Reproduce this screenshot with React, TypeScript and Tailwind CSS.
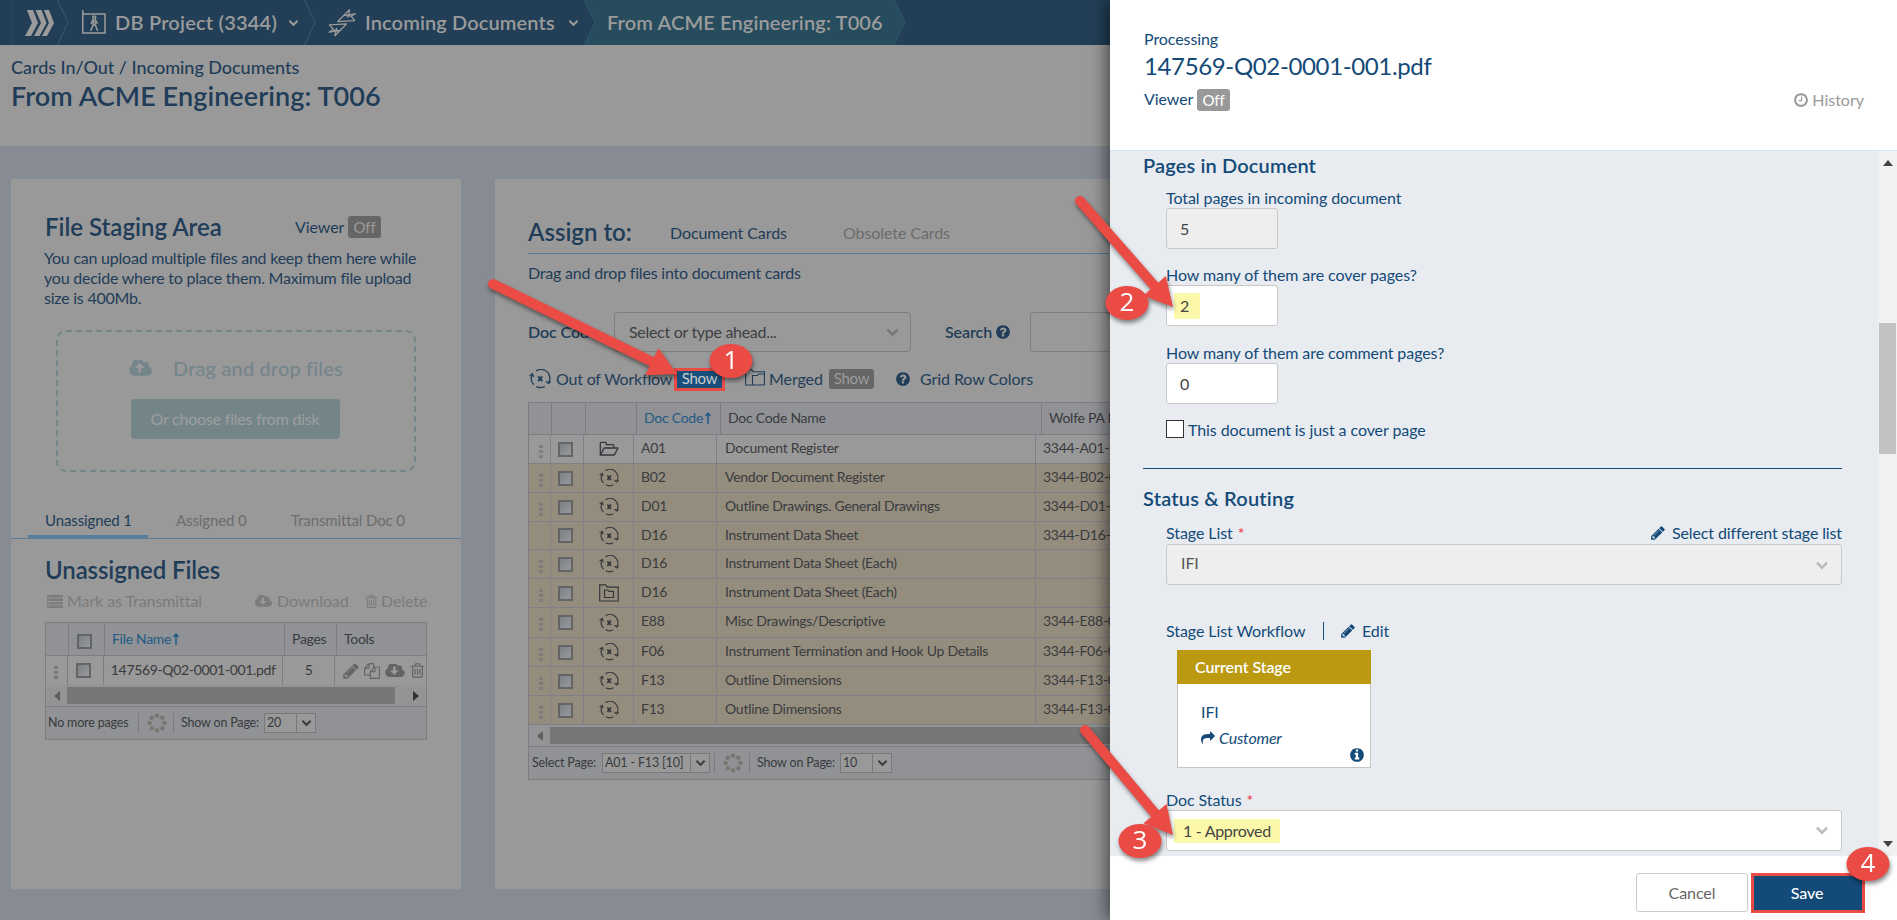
import type { ReactNode } from 'react';

const CLOUD =
  'M1856 1152q0 159-112.5 271.5t-271.5 112.5h-1088q-185 0-316.5-131.5t-131.5-316.5q0-130 70-240t188-165q-2-30-2-43 0-212 150-362t362-150q156 0 285.5 87t188.5 231q71-62 166-62 106 0 181 75t75 181q0 76-41 138 130 31 213.5 135.5t83.5 238.5z';

const PATHS = {
  trash:
    'M704 736v576q0 14-9 23t-23 9h-64q-14 0-23-9t-9-23v-576q0-14 9-23t23-9h64q14 0 23 9t9 23zm256 0v576q0 14-9 23t-23 9h-64q-14 0-23-9t-9-23v-576q0-14 9-23t23-9h64q14 0 23 9t9 23zm256 0v576q0 14-9 23t-23 9h-64q-14 0-23-9t-9-23v-576q0-14 9-23t23-9h64q14 0 23 9t9 23zm128 724v-948h-896v948q0 22 7 40.5t14.5 27 10.5 8.5h832q3 0 10.5-8.5t14.5-27 7-40.5zm-672-1076h448l-48-117q-7-9-17-11h-317q-10 2-17 11zm928 32v64q0 14-9 23t-23 9h-96v948q0 83-47 143.5t-113 60.5h-832q-66 0-113-58.5t-47-141.5v-952h-96q-14 0-23-9t-9-23v-64q0-14 9-23t23-9h309l70-167q15-37 54-63t79-26h320q40 0 79 26t54 63l70 167h309q14 0 23 9t9 23z',
  clock:
    'M1024 544v448q0 14-9 23t-23 9h-320q-14 0-23-9t-9-23v-64q0-14 9-23t23-9h224v-352q0-14 9-23t23-9h64q14 0 23 9t9 23zm416 352q0-148-73-273t-198-198-273-73-273 73-198 198-73 273 73 273 198 198 273 73 273-73 198-198 73-273zm224 0q0 209-103 385.5t-279.5 279.5-385.5 103-385.5-103-279.5-279.5-103-385.5 103-385.5 279.5-279.5 385.5-103 385.5 103 279.5 279.5 103 385.5z',
  share:
    'M1792 640q0 26-19 45l-512 512q-19 19-45 19t-45-19-19-45v-256h-224q-98 0-175.5 6t-154 21.5-133 42.5-105.5 69.5-80 101-48.5 138.5-17.5 181q0 55 5 123 0 6 2.5 23.5t2.5 26.5q0 15-8.5 25t-23.5 10q-16 0-28-17-7-9-13-22t-13.5-30-10.5-24q-127-285-127-451 0-199 53-333 162-403 875-403h224v-256q0-26 19-45t45-19 45 19l512 512q19 19 19 45z',
  pencil:
    'M491 1536l91-91-235-235-91 91v107h128v128h107zm523-928q0-22-22-22-10 0-17 7l-542 542q-7 7-7 17 0 22 22 22 10 0 17-7l542-542q7-7 7-17zm-54-192l416 416-832 832h-416v-416zm683 96q0 53-37 90l-166 166-416-416 166-165q36-38 90-38 53 0 91 38l235 234q37 39 37 91z',
  files:
    'M1696 384q40 0 68 28t28 68v1216q0 40-28 68t-68 28h-960q-40 0-68-28t-28-68v-288h-544q-40 0-68-28t-28-68v-672q0-40 20-88t48-76l408-408q28-28 76-48t88-20h416q40 0 68 28t28 68v328q68-40 128-40h416zm-544 213l-299 299h299v-299zm-640-384l-299 299h299v-299zm196 647l316-316v-416h-384v416q0 40-28 68t-68 28h-416v640h512v-256q0-40 20-88t48-76zm956 804v-1152h-384v416q0 40-28 68t-68 28h-416v640h896z',
  question:
    'M1024 1376v-192q0-14-9-23t-23-9h-192q-14 0-23 9t-9 23v192q0 14 9 23t23 9h192q14 0 23-9t9-23zm256-672q0-88-55.5-163t-138.5-116-170-41q-243 0-371 213-15 24 8 42l132 100q7 6 19 6 16 0 25-12 53-68 86-92 34-24 86-24 48 0 85.5 26t37.5 59q0 38-20 61t-68 45q-63 28-115.5 86.5t-52.5 125.5v36q0 14 9 23t23 9h192q14 0 23-9t9-23q0-19 21.5-49.5t54.5-49.5q32-18 49-28.5t46-35 44.5-48 28-60.5 12.5-81zm384 192q0 209-103 385.5t-279.5 279.5-385.5 103-385.5-103-279.5-279.5-103-385.5 103-385.5 279.5-279.5 385.5-103 385.5 103 279.5 279.5 103 385.5z',
  info:
    'M1152 1376v-160q0-14-9-23t-23-9h-96v-512q0-14-9-23t-23-9h-320q-14 0-23 9t-9 23v160q0 14 9 23t23 9h96v320h-96q-14 0-23 9t-9 23v160q0 14 9 23t23 9h448q14 0 23-9t9-23zm-128-896v-160q0-14-9-23t-23-9h-192q-14 0-23 9t-9 23v160q0 14 9 23t23 9h192q14 0 23-9t9-23zm640 416q0 209-103 385.5t-279.5 279.5-385.5 103-385.5-103-279.5-279.5-103-385.5 103-385.5 279.5-279.5 385.5-103 385.5 103 279.5 279.5 103 385.5z',
};

function Fa({ name, className = '' }: { name: keyof typeof PATHS; className?: string }) {
  return (
    <svg viewBox="0 0 1792 1792" fill="currentColor" fillRule="evenodd" className={'shrink-0 ' + className}>
      <path d={PATHS[name]} />
    </svg>
  );
}

function Cloud({ up, hole, className = '' }: { up?: boolean; hole: string; className?: string }) {
  return (
    <svg viewBox="-64 256 1920 1280" className={'shrink-0 ' + className}>
      <path d={CLOUD} fill="currentColor" />
      <path
        fill={hole}
        d={
          up
            ? 'M1216 864q0-14-9-23l-352-352q-9-9-23-9t-23 9l-351 351q-10 12-10 24 0 14 9 23t23 9h224v352q0 13 9.5 22.5t22.5 9.5h192q13 0 22.5-9.5t9.5-22.5v-352h224q13 0 22.5-9.5t9.5-22.5z'
            : 'M1216 928q0-14-9-23t-23-9h-224v-352q0-13-9.5-22.5t-22.5-9.5h-192q-13 0-22.5 9.5t-9.5 22.5v352h-224q-13 0-22.5 9.5t-9.5 22.5q0 14 9 23l352 352q9 9 23 9t23-9l351-351q10-12 10-24z'
        }
      />
    </svg>
  );
}

function OutOfWorkflow({ className }: { className: string }) {
  return (
    <svg viewBox="0 0 22 20" className={'shrink-0 ' + className} fill="none" stroke="currentColor" strokeWidth="1.3">
      <path d="M7.200 1.900A8.800 8.800 0 0 1 19.600 13.800M3.300 5.500A8.800 8.800 0 0 0 4.900 15.700M7.400 17.600A8.800 8.800 0 0 0 15.800 17.500" />
      <path d="M.5 6.800 3.500 4.800 4.600 8M17 12.300l2.400 2.200 2.400-2" />
      <path d="m9.200 7.400 4 4.800m0-4.800-4 4.800" strokeWidth="1.900" />
    </svg>
  );
}

function OpenFolder() {
  return (
    <svg viewBox="0 0 20 16" className="h-4 w-5" fill="none" stroke="currentColor" strokeWidth="1.3" strokeLinejoin="round">
      <path d="M1.3 14V2.3q0-1 1-1h4q1 0 1 1V3.6h6.500q1 0 1 1V7M1.3 14 4.8 7.600q.3-.6 1-.6h12.500q.8 0 .4.700l-3 5.700q-.3.600-1 .600H1.300z" />
    </svg>
  );
}

function BoxFolder() {
  return (
    <svg viewBox="0 0 20 18" className="h-[18px] w-5 shrink-0" fill="none" stroke="currentColor" strokeWidth="1.200">
      <path d="M.7 17V.8h6l1.500 2.300h11V17z" />
      <path d="M5.500 13.500V6h3.300l1 1.400h4.700v6.100z" />
    </svg>
  );
}

function MergedFolder() {
  return (
    <svg viewBox="0 0 20 17" className="h-[17px] w-5 shrink-0" fill="none" stroke="currentColor" strokeWidth="1.100">
      <path d="M7.500 16H.6V.8h6L8 2.800h11.400V16" />
      <path d="M7.500 16V6.500h4.800l1.200-1.500h5.900M7.500 16h11.900" />
    </svg>
  );
}

function SortArrow() {
  return (
    <svg viewBox="0 0 6 12" className="ml-[2px] inline-block h-3 w-[6px] -translate-y-px" fill="none" stroke="currentColor" strokeWidth="1.500">
      <path d="M3 12V1.500M.5 4 3 1.200 5.500 4" />
    </svg>
  );
}

function Spinner() {
  return (
    <svg viewBox="0 0 20 20" className="size-5 shrink-0" fill="#767770">
      <circle cx="10" cy="2.600" r="2.200" />
      <circle cx="15.300" cy="4.700" r="2.200" />
      <circle cx="17.400" cy="10" r="2.200" />
      <circle cx="15.300" cy="15.300" r="2.200" />
      <circle cx="10" cy="17.400" r="2.200" />
      <circle cx="4.700" cy="15.300" r="2.200" />
      <circle cx="2.600" cy="10" r="2.200" />
      <circle cx="4.700" cy="4.700" r="2.200" />
    </svg>
  );
}

function Chevron({ className = '' }: { className?: string }) {
  return (
    <svg viewBox="0 0 12 8" className={'shrink-0 ' + className} fill="none" stroke="currentColor" strokeWidth="2.200">
      <path d="m1.500 1.500 4.500 4.500 4.500-4.500" />
    </svg>
  );
}

function Box() {
  return <span className="block size-[15px] border-2 border-[#636466] bg-linear-to-br from-[#7d8084] to-[#96989b]" />;
}

function Grip() {
  return (
    <span className="flex flex-col gap-[2px]">
      <i className="block h-[3px] w-1 bg-[#78797b]" />
      <i className="block h-[3px] w-1 bg-[#78797b]" />
      <i className="block h-[3px] w-1 bg-[#78797b]" />
    </span>
  );
}

function Separator({ className = '' }: { className?: string }) {
  return (
    <svg viewBox="0 0 12 45" className={'h-[45px] w-3 shrink-0 ' + className} fill="none" stroke="#2f5569" strokeWidth="1.300">
      <path d="M.5 0 11 22.500.5 45" />
    </svg>
  );
}

function MiniSelect({ value, className }: { value: string; className: string }) {
  return (
    <span className={'flex h-5 border border-[#77797b] bg-[#999] ' + className}>
      <span className="flex-1 pl-[2px] leading-[18px]">{value}</span>
      <span className="flex w-[19px] items-center justify-center border-l border-[#77797b]">
        <Chevron className="h-2 w-[11px] text-[#3a3d40]" />
      </span>
    </span>
  );
}

function NavBar() {
  return (
    <nav className="flex h-[45px] items-center bg-[#233f57] text-[20px] leading-[26px] font-semibold text-[#9b9b9b]">
      <span className="ml-[11px] h-full w-px bg-[#294a60]" />
      <svg viewBox="0 0 30 26" className="ml-[13px] h-[26px] w-[30px]" fill="#9b9b9b">
        <path d="M2 0h6l5 13-7 13H0l7-13zM10.500 0h6l5 13-7 13h-5.500l7-13zM19 0h5l5 13-7 13h-5l7-13z" />
      </svg>
      <Separator className="ml-[2px]" />
      <svg viewBox="0 0 26 25" className="ml-3 h-[25px] w-[26px]" fill="none" stroke="#9b9b9b" strokeWidth="1.500">
        <path d="M1.800 0v23.300M1 4h23v19H1" />
        <circle cx="13.200" cy="7.500" r="1.500" />
        <path d="m12 9.500-2 4.500M12.200 9.500v5l-2.500 6.500M14.300 9.500l2.200 4.500M14.200 9.500v5L16.700 21M11.500 15h3.500" />
      </svg>
      <span className="ml-[8px] w-[173px] pb-[2px] tracking-[0.21px]">DB Project (3344)</span>
      <Chevron className="h-[8px] w-[11px]" />
      <Separator className="ml-[5px]" />
      <svg viewBox="0 0 30 30" className="ml-3 h-[30px] w-[29px]" fill="none" stroke="#9b9b9b" strokeWidth="1.300" strokeLinejoin="round">
        <path d="M22.500 1 10 13.500l17.500-1-3.500-4.500 4.500-2.500-11 1.500M22.500 1l-2 8.500M17 7l7 1" />
        <path d="m7 28.500 12-12.500-17.500 1 4 4.500-4.500 3 11-1.500M7 28.500l2-8.500M12.500 23l-7-1" />
      </svg>
      <span className="ml-[8px] w-[203px] pb-[2px] tracking-[0.12px]">Incoming Documents</span>
      <Chevron className="h-[8px] w-[11px]" />
      <div className="relative ml-[5px] flex h-[45px] w-[322px] items-center">
        <svg viewBox="0 0 322 45" className="absolute inset-0 h-[45px] w-[322px]">
          <path d="M.5 0H310l11 22.500L310 45H.5L11 22.500z" fill="#264c5e" />
          <path d="M.5 0 11 22.500.5 45M310 0l11 22.500L310 45" fill="none" stroke="#2f5a6c" />
        </svg>
        <span className="relative ml-[23px] pb-[2px] tracking-[0.13px]">From ACME Engineering: T006</span>
      </div>
    </nav>
  );
}

function StagingCard() {
  return (
    <section className="h-[710px] w-[450px] shrink-0 bg-[#999] tracking-[-0.08px]">
      <div className="mt-[33px] flex h-[30px] items-center pl-[34px]">
        <h2 className="w-[250px] text-[24px] font-semibold tracking-normal">File Staging Area</h2>
        <span className="w-[53px] text-[16px]">Viewer</span>
        <span className="h-[22px] w-[33px] rounded-[3px] bg-[#666] text-center text-[15px] leading-[22px] text-[#9c9c9c]">Off</span>
      </div>
      <p className="mt-[6px] pl-[33px] text-[16px] leading-5 tracking-[-0.23px]">
        You can upload multiple files and keep them here while
        <br />
        you decide where to place them. Maximum file upload
        <br />
        size is 400Mb.
      </p>
      <div className="mt-[22px] ml-[45px] flex h-[142px] w-[360px] flex-col items-center rounded-[10px] border-2 border-dashed border-[#748589] text-[#74858b]">
        <div className="mt-[23px] flex h-[26px] w-full items-center pl-[71px]">
          <Cloud up hole="#999" className="h-4 w-[23px]" />
          <span className="ml-[21px] text-[20px] leading-6 font-medium tracking-[0.15px]">Drag and drop files</span>
        </div>
        <span className="mt-[18px] mr-[2px] h-10 w-[209px] rounded-[4px] bg-[#74858a] text-center text-[16px] leading-10 tracking-[-0.22px] text-[#9e9e9e]">
          Or choose files from disk
        </span>
      </div>
      <div className="mt-[34px] flex h-[33px] items-end border-b border-[#587d98] pl-[17px] text-[15px] tracking-[-0.12px] text-[#6c6c6c]">
        <span className="h-8 w-[120px] border-b-[3px] border-[#587d98] pl-[17px] leading-[28px] text-[#1f3d58]">Unassigned 1</span>
        <span className="h-8 w-[115px] pl-7 leading-[28px]">Assigned 0</span>
        <span className="h-8 pl-7 leading-[28px]">Transmittal Doc 0</span>
      </div>
      <h2 className="mt-[15px] pl-[34px] text-[24px] leading-[32px] font-semibold tracking-[-0.1px]">Unassigned Files</h2>
      <div className="mt-[5px] flex h-5 items-center pl-[36px] text-[16px] text-[#7b7b7b]">
        <svg viewBox="0 0 16 13" className="h-[13px] w-4" fill="currentColor">
          <path d="M0 0h2.500v2.500H0zM3 0h13v2.500H3zM0 3.500h2.500V6H0zM3 3.500h13V6H3zM0 7h2.500v2.500H0zM3 7h13v2.500H3zM0 10.500h2.500V13H0zM3 10.500h13V13H3z" />
        </svg>
        <span className="ml-1 w-[188px]">Mark as Transmittal</span>
        <Cloud hole="#999" className="h-3 w-[17px]" />
        <span className="ml-[5px] w-[87px]">Download</span>
        <Fa name="trash" className="size-[15px]" />
        <span className="ml-[2px]">Delete</span>
      </div>
      <div className="mt-[11px] ml-[34px] w-[382px] border border-[#7c7d80] text-[14px] tracking-[-0.3px] text-[#393b3e]">
        <div className="flex h-[33px] border-b border-[#7c7d80] bg-[#909295] leading-[31px]">
          <span className="w-[23px] border-r border-[#7c7d80]" />
          <span className="flex w-9 items-center border-r border-[#7c7d80] pt-1 pl-2">
            <Box />
          </span>
          <span className="w-[180px] border-r border-[#7c7d80] pl-[7px] text-[#1f5a86]">
            File Name
            <SortArrow />
          </span>
          <span className="w-[52px] border-r border-[#7c7d80] pl-[7px]">Pages</span>
          <span className="pl-[7px]">Tools</span>
        </div>
        <div className="flex h-[29px] leading-[27px]">
          <span className="flex w-[22px] items-center justify-center border-r border-[#7c7d80] pt-1">
            <Grip />
          </span>
          <span className="flex w-9 items-center border-r border-[#7c7d80] pl-2">
            <Box />
          </span>
          <span className="w-[180px] border-r border-[#7c7d80] pl-[7px] tracking-[-0.34px]">147569-Q02-0001-001.pdf</span>
          <span className="w-[52px] border-r border-[#7c7d80] text-center">5</span>
          <span className="flex items-center gap-[3px] pl-[7px] text-[#626466]">
            <Fa name="pencil" className="size-[18px]" />
            <Fa name="files" className="ml-px size-4" />
            <Cloud hole="#999" className="ml-[2px] h-[13px] w-[20px]" />
            <Fa name="trash" className="ml-px size-[17px]" />
          </span>
        </div>
        <div className="flex h-[21px] items-center bg-[#939495]">
          <svg viewBox="0 0 6 10" className="ml-[8px] h-[10px] w-[6px]" fill="#5d5d5d">
            <path d="M6 0v10L0 5z" />
          </svg>
          <span className="ml-[7px] h-[17px] w-[328px] bg-[#777]" />
          <svg viewBox="0 0 6 10" className="ml-[18px] h-[10px] w-[6px]" fill="#333">
            <path d="M0 0v10l6-5z" />
          </svg>
        </div>
        <div className="flex h-[33px] items-center border-t border-[#7c7d80] bg-[#909295] text-[12.500px] tracking-[-0.18px]">
          <span className="w-[92px] pl-[2px]">No more pages</span>
          <span className="h-5 w-px bg-[#7c7d80]" />
          <span className="ml-2">
            <Spinner />
          </span>
          <span className="ml-[6px] h-5 w-px bg-[#7c7d80]" />
          <span className="ml-[7px] w-[83px]">Show on Page:</span>
          <MiniSelect value="20" className="w-[52px]" />
        </div>
      </div>
    </section>
  );
}

type Row = { code: string; name: string; num: string; icon: 'open' | 'out' | 'box'; grip: boolean; height: string };

const ROWS: Row[] = [
  { code: 'A01', name: 'Document Register', num: '3344-A01-001', icon: 'open', grip: true, height: 'h-[29px]' },
  { code: 'B02', name: 'Vendor Document Register', num: '3344-B02-001', icon: 'out', grip: true, height: 'h-[29px]' },
  { code: 'D01', name: 'Outline Drawings. General Drawings', num: '3344-D01-001', icon: 'out', grip: true, height: 'h-[29px]' },
  { code: 'D16', name: 'Instrument Data Sheet', num: '3344-D16-001', icon: 'out', grip: false, height: 'h-[28px]' },
  { code: 'D16', name: 'Instrument Data Sheet (Each)', num: '', icon: 'out', grip: true, height: 'h-[29px]' },
  { code: 'D16', name: 'Instrument Data Sheet (Each)', num: '', icon: 'box', grip: true, height: 'h-[29px]' },
  { code: 'E88', name: 'Misc Drawings/Descriptive', num: '3344-E88-001', icon: 'out', grip: true, height: 'h-[30px]' },
  { code: 'F06', name: 'Instrument Termination and Hook Up Details', num: '3344-F06-001', icon: 'out', grip: true, height: 'h-[29px]' },
  { code: 'F13', name: 'Outline Dimensions', num: '3344-F13-001', icon: 'out', grip: true, height: 'h-[29px]' },
  { code: 'F13', name: 'Outline Dimensions', num: '3344-F13-002', icon: 'out', grip: true, height: 'h-[29px]' },
];

function AssignCard() {
  return (
    <section className="h-[710px] w-[1375px] shrink-0 bg-[#999] pl-[33px] tracking-[-0.08px]">
      <div className="mt-[37px] flex h-[38px] items-start border-b border-[#587d98] leading-[32px]">
        <h2 className="w-[142px] text-[24px] font-semibold tracking-normal">Assign to:</h2>
        <span className="w-[173px] pt-px text-[16px]">Document Cards</span>
        <span className="pt-px text-[16px] text-[#6c6c6c]">Obsolete Cards</span>
      </div>
      <p className="mt-[9px] text-[16px] leading-5 tracking-[-0.2px]">Drag and drop files into document cards</p>
      <div className="mt-[29px] flex h-10 items-center">
        <span className="w-[86px] text-[16px] font-semibold">Doc Code</span>
        <span className="flex h-10 w-[297px] items-center justify-between rounded-[4px] border border-[#7e7e7e] pr-[10px] pl-[14px] text-[16px] tracking-[-0.3px] text-[#3d4043]">
          Select or type ahead...
          <Chevron className="h-[9px] w-[15px] text-[#777]" />
        </span>
        <span className="ml-[34px] w-[52px] text-[16px] font-semibold">Search</span>
        <Fa name="question" className="-ml-[2px] size-[16px]" />
        <span className="ml-[19px] h-10 w-[300px] rounded-[4px] border border-[#7e7e7e]" />
      </div>
      <div className="mt-[17px] flex h-5 items-center text-[16px]">
        <OutOfWorkflow className="ml-px h-5 w-[22px]" />
        <span className="ml-[5px] w-[118px] tracking-[-0.2px]">Out of Workflow</span>
        <span className="h-[23px] w-[51px] border-[3px] border-[#ea4b45] bg-[#17507c] text-center text-[15px] leading-[15px] tracking-[-0.3px] text-[#ccc]">Show</span>
        <span className="ml-[20px] -translate-y-[2px]">
          <MergedFolder />
        </span>
        <span className="ml-[4px] w-[60px]">Merged</span>
        <span className="h-5 w-[45px] rounded-[3px] bg-[#666] text-center text-[15px] leading-[18px] tracking-[-0.3px] text-[#9c9c9c]">Show</span>
        <Fa name="question" className="ml-[21px] size-4" />
        <span className="ml-[9px]">Grid Row Colors</span>
      </div>
      <div className="mt-[13px] w-[1300px] border border-[#7c7d80] text-[14px] tracking-[-0.26px] text-[#393b3e]">
        <div className="flex h-8 border-b border-[#7c7d80] bg-[#909295] leading-[29px]">
          <span className="w-[23px] border-r border-[#7c7d80]" />
          <span className="w-[34px] border-r border-[#7c7d80]" />
          <span className="w-[51px] border-r border-[#7c7d80]" />
          <span className="w-[84px] border-r border-[#7c7d80] pl-[7px] text-[#1f5a86]">
            Doc Code
            <SortArrow />
          </span>
          <span className="w-[321px] border-r border-[#7c7d80] pl-[7px]">Doc Code Name</span>
          <span className="pl-[7px]">Wolfe PA Doc Number</span>
        </div>
        {ROWS.map((row, i) => (
          <div
            key={i}
            className={
              'flex border-b border-[#7f8087] leading-[25px] ' + row.height + (i === 0 ? ' bg-[#999]' : ' bg-[#948d7e]')
            }
          >
            <span className="flex w-[22px] items-center justify-center border-r border-[#7f8087] pt-1 pl-[2px] opacity-80">
              {row.grip ? <Grip /> : null}
            </span>
            <span className="flex w-[33px] items-center border-r border-[#7f8087] pl-[7px]">
              <Box />
            </span>
            <span className="flex w-[50px] items-center justify-center border-r border-[#7f8087] pl-px text-[#35383b]">
              {row.icon === 'open' ? <OpenFolder /> : row.icon === 'box' ? <BoxFolder /> : <OutOfWorkflow className="h-[18px] w-5" />}
            </span>
            <span className="w-[83px] border-r border-[#7f8087] pl-[7px]">{row.code}</span>
            <span className="w-[319px] border-r border-[#7f8087] pl-2">{row.name}</span>
            <span className="pl-[7px]">{row.num}</span>
          </div>
        ))}
        <div className="flex h-[21px] items-center bg-[#939495]">
          <svg viewBox="0 0 6 10" className="ml-[8px] h-[10px] w-[6px]" fill="#5d5d5d">
            <path d="M6 0v10L0 5z" />
          </svg>
          <span className="ml-[7px] h-[17px] flex-1 bg-[#777]" />
        </div>
        <div className="flex h-[33px] items-center border-t border-[#7c7d80] bg-[#909295] text-[12.500px] tracking-[-0.18px]">
          <span className="w-[73px] pl-[3px]">Select Page:</span>
          <MiniSelect value="A01 - F13 [10]" className="w-[108px]" />
          <span className="ml-1 h-5 w-px bg-[#7c7d80]" />
          <span className="ml-[8px]">
            <Spinner />
          </span>
          <span className="ml-[6px] h-5 w-px bg-[#7c7d80]" />
          <span className="ml-[7px] w-[83px]">Show on Page:</span>
          <MiniSelect value="10" className="w-[52px]" />
        </div>
      </div>
    </section>
  );
}

function Star() {
  return <span className="ml-[5px] text-[#f0303a]">*</span>;
}

function Field({ label, value, className, children }: { label: string; value?: string; className: string; children?: ReactNode }) {
  return (
    <div className={'pl-[23px] ' + className}>
      <div className="h-5 leading-5">{label}</div>
      <div
        className={
          'h-[41px] w-[112px] rounded-[3px] border border-[#c8c8c8] text-[#444] leading-[40px] ' +
          (children ? 'flex items-center bg-white pl-[7px]' : value === '5' ? 'bg-[#eee] pl-[13px]' : 'bg-white pl-[13px]')
        }
      >
        {children ?? value}
      </div>
    </div>
  );
}

function ProcessingPanel() {
  return (
    <aside className="absolute inset-y-0 right-0 flex w-[787px] flex-col bg-white text-[16px] tracking-[-0.08px] text-[#134a78] shadow-[-3px_0_16px_rgba(0,0,0,0.55)]">
      <header className="h-[150px] pt-[29px] pr-[33px] pl-[34px]">
        <div className="leading-5">Processing</div>
        <h1 className="mt-[2px] text-[24px] leading-[30px] tracking-[-0.36px]">147569-Q02-0001-001.pdf</h1>
        <div className="mt-[8px] flex h-[22px] items-center">
          <span className="w-[53px] pb-[2px]">Viewer</span>
          <span className="h-[22px] w-[33px] rounded-[3px] bg-[#999] text-center text-[15px] leading-[22px] text-white">Off</span>
          <span className="ml-auto flex items-center tracking-normal text-[#999]">
            <Fa name="clock" className="mr-[3px] size-4" />
            History
          </span>
        </div>
      </header>
      <div className="flex h-[706px] border-t border-[#d3e6f7] bg-[#e8ecf1]">
        <div className="w-[768px] overflow-hidden pr-[36px] pl-[33px]">
          <h2 className="mt-px text-[20px] leading-[26px] font-semibold tracking-[0.14px]">Pages in Document</h2>
          <Field label="Total pages in incoming document" value="5" className="mt-[10px]" />
          <Field label="How many of them are cover pages?" className="mt-[16px]">
            <span className="h-[26px] w-[26px] bg-[#fbf8a9] pl-[6px] leading-[26px]">2</span>
          </Field>
          <Field label="How many of them are comment pages?" value="0" className="mt-[17px]" />
          <div className="mt-[15px] flex h-5 items-center pl-[23px]">
            <span className="size-[18px] border-[1.500px] border-[#333] bg-white" />
            <span className="ml-[4px] pt-[2px]">This document is just a cover page</span>
          </div>
          <hr className="mt-[29px] border-t border-[#134a78]" />
          <h2 className="mt-[16px] text-[20px] leading-[26px] font-semibold tracking-[0.2px]">Status &amp; Routing</h2>
          <div className="mt-[11px] flex h-[22px] items-center pl-[23px]">
            Stage List
            <Star />
            <Fa name="pencil" className="mr-[6px] ml-auto size-4" />
            <span className="tracking-[-0.12px]">Select different stage list</span>
          </div>
          <div className="ml-[23px] flex h-[41px] items-center justify-between rounded-[3px] border border-[#c8c8c8] bg-[#eee] pr-[12px] pb-[3px] pl-[14px] text-[#555]">
            IFI
            <Chevron className="mt-1 h-[9px] w-[14px] text-[#bbb]" />
          </div>
          <div className="mt-[36px] flex h-5 items-center pl-[23px]">
            <span className="w-[157px]">Stage List Workflow</span>
            <span className="h-[18px] w-px bg-[#134a78]" />
            <Fa name="pencil" className="ml-[16px] size-4" />
            <span className="ml-[6px]">Edit</span>
          </div>
          <div className="mt-[9px] ml-[34px] h-[118px] w-[194px] border border-[#c5c5c5] bg-white">
            <div className="-mx-px -mt-px h-[34px] bg-[#bb9a12] pl-[18px] leading-[34px] font-semibold tracking-[-0.1px] text-white">Current Stage</div>
            <div className="mt-[18px] pl-[23px] leading-5">IFI</div>
            <div className="mt-[6px] flex items-center pl-[23px] leading-5 tracking-[-0.2px] italic">
              <Fa name="share" className="mr-[4px] size-[14px]" />
              Customer
            </div>
            <Fa name="info" className="mt-[-1px] ml-[171px] size-4" />
          </div>
          <div className="mt-[22px] flex h-5 items-center pl-[23px]">
            Doc Status
            <Star />
          </div>
          <div className="ml-[23px] flex h-[41px] items-center justify-between rounded-[3px] border border-[#c8c8c8] bg-white pr-[12px] pl-[7px] text-[#444]">
            <span className="h-6 w-[106px] bg-[#fbf8a9] pl-[9px] leading-[24px] tracking-[-0.3px]">1 - Approved</span>
            <Chevron className="h-[9px] w-[14px] text-[#bbb]" />
          </div>
        </div>
        <div className="flex flex-1 flex-col items-center bg-[#f1f1f1]">
          <svg viewBox="0 0 10 6" className="mt-[9px] h-[6px] w-[10px]" fill="#444">
            <path d="M5 0 10 6H0z" />
          </svg>
          <span className="mt-[157px] h-[131px] w-[17px] bg-[#c1c1c1]" />
          <svg viewBox="0 0 10 6" className="mt-[387px] h-[6px] w-[10px]" fill="#444">
            <path d="M0 0h10L5 6z" />
          </svg>
        </div>
      </div>
      <footer className="flex flex-1 justify-end gap-[3px] pt-[17px] pr-8">
        <span className="h-[39px] w-[112px] rounded-[3px] border border-[#ccc] text-center leading-[38px] text-[#666]">Cancel</span>
        <span className="h-[40px] w-[114px] border-[3px] border-[#ea4b45] bg-[#134a78] pr-[2px] text-center leading-[33px] font-medium text-white">Save</span>
      </footer>
    </aside>
  );
}

const ARROWS = [
  { x1: 493, y1: 284, x2: 677, y2: 374 },
  { x1: 1080, y1: 201, x2: 1173, y2: 307 },
  { x1: 1085, y1: 730, x2: 1173, y2: 835 },
];

const BADGES = [
  { n: '1', x: 731, y: 361 },
  { n: '2', x: 1127, y: 303 },
  { n: '3', x: 1140, y: 841 },
  { n: '4', x: 1868, y: 864 },
];

function Annotations() {
  return (
    <svg viewBox="0 0 1897 920" className="absolute inset-0 h-[920px] w-[1897px] drop-shadow-[1px_3px_2px_rgba(0,0,0,0.45)]">
      {ARROWS.map((a, i) => {
        const len = Math.hypot(a.x2 - a.x1, a.y2 - a.y1);
        const ux = (a.x2 - a.x1) / len;
        const uy = (a.y2 - a.y1) / len;
        const bx = a.x2 - ux * 28;
        const by = a.y2 - uy * 28;
        return (
          <g key={i} fill="#ea4b45" stroke="#ea4b45">
            <line x1={a.x1} y1={a.y1} x2={bx} y2={by} strokeWidth="10" strokeLinecap="round" />
            <path
              stroke="none"
              d={`M${a.x2} ${a.y2}L${bx - uy * 15} ${by + ux * 15}L${bx + uy * 15} ${by - ux * 15}z`}
            />
          </g>
        );
      })}
      {BADGES.map((b) => (
        <g key={b.n}>
          <ellipse cx={b.x} cy={b.y} rx="21.500" ry="17" fill="#ea4b45" />
          <text x={b.x} y={b.y + 8} textAnchor="middle" fill="#fff" fontSize="26" fontFamily="Open Sans, sans-serif">
            {b.n}
          </text>
        </g>
      ))}
    </svg>
  );
}

export default function App() {
  return (
    <div className="relative h-[920px] w-[1897px] overflow-hidden bg-[#878b93] font-['Lato',sans-serif] whitespace-nowrap text-[#1f3d58]">
      <NavBar />
      <header className="h-[101px] bg-[#999] pt-[11px] pl-[11px]">
        <div className="text-[18px] leading-[22px] font-medium tracking-[-0.03px]">Cards In/Out / Incoming Documents</div>
        <h1 className="mt-[2px] text-[27px] leading-[32px] font-semibold tracking-[0.08px]">From ACME Engineering: T006</h1>
      </header>
      <main className="mt-[33px] ml-[11px] flex gap-[34px]">
        <StagingCard />
        <AssignCard />
      </main>
      <ProcessingPanel />
      <Annotations />
    </div>
  );
}
